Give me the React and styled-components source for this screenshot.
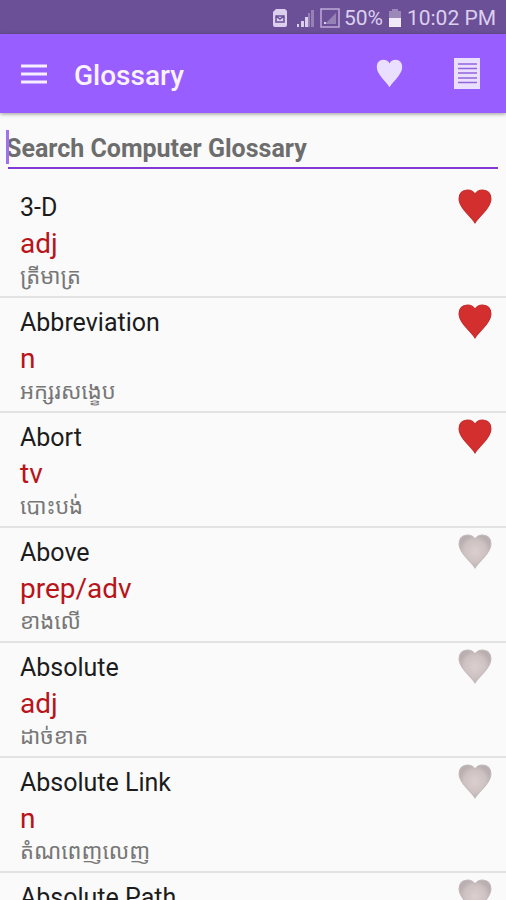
import React, { useState } from "react";
import styled, { createGlobalStyle } from "styled-components";

const GlobalStyle = createGlobalStyle`
  * {
    box-sizing: border-box;
  }

  body {
    margin: 0;
    background-color: #fafafa;
    font-family: Roboto, "Noto Sans Khmer", "Khmer OS", sans-serif;
  }
`;

const Screen = styled.div`
  display: flex;
  flex-direction: column;
  height: 100vh;
  overflow: hidden;
`;

const StatusBar = styled.div`
  display: flex;
  flex: none;
  align-items: center;
  justify-content: flex-end;
  height: 34px;
  padding: 2px 10px 0 0;
  background-color: #6b5098;
  color: #dccfee;
  font-size: 21px;
  line-height: 24px;
`;

const StatusIcon = styled.svg`
  flex: none;
  margin-right: ${props => props.$gap}px;
`;

const StatusText = styled.span`
  margin-right: ${props => props.$gap || 0}px;
`;

const Toolbar = styled.header`
  display: flex;
  flex: none;
  align-items: center;
  height: 79px;
  padding: 0 21px 0 16px;
  background-color: #985eff;
  box-shadow: 0 1px 4px rgba(0, 0, 0, 0.4);
  z-index: 1;
`;

const Title = styled.h1`
  flex: 1;
  margin: 0 0 0 22px;
  padding-top: 4px;
  color: #f8f3ff;
  font-size: 28px;
  font-weight: 500;
  line-height: 32px;
`;

const IconButton = styled.button`
  display: flex;
  align-items: center;
  justify-content: center;
  width: 36px;
  height: 44px;
  margin-left: ${props => props.$gap || 0}px;
  padding: 0;
  border: none;
  background: none;
`;

const SearchBox = styled.label`
  position: relative;
  display: block;
  flex: none;
  height: 56px;
  margin: 0 8px;
  border-bottom: 2px solid #8338d8;
`;

const SearchInput = styled.input`
  width: 100%;
  height: 40px;
  margin: 15px 0 0 -2px;
  padding: 0;
  border: none;
  outline: none;
  background: none;
  color: #333;
  font-family: inherit;
  font-size: 25px;
  font-weight: 700;

  &::placeholder {
    color: #6d6d6d;
    opacity: 1;
  }
`;

const Caret = styled.span`
  position: absolute;
  top: 17px;
  left: -2px;
  width: 3px;
  height: 34px;
  background-color: #a070f0;
`;

const WordList = styled.ul`
  flex: 1;
  min-height: 0;
  margin: 0;
  padding: 14px 0 0;
  overflow-y: auto;
  list-style: none;
  scrollbar-width: none;
`;

const WordRow = styled.li`
  display: flex;
  align-items: flex-start;
  justify-content: space-between;
  height: 115px;
  padding: 6px 14px 0 20px;
  border-bottom: 2px solid #e2e2e2;
`;

const Word = styled.div`
  color: #1c1c1c;
  font-size: 25px;
  line-height: 37px;
`;

const WordType = styled.div`
  color: #b8141a;
  font-size: 28px;
  line-height: 36px;
`;

const Meaning = styled.div`
  color: #777;
  font-size: 22px;
  line-height: 30px;
`;

const HeartButton = styled.button`
  display: block;
  padding: 0;
  border: none;
  background: none;
  line-height: 0;
`;

const words = [
  { word: "3-D", type: "adj", meaning: "ត្រីមាត្រ", liked: true },
  { word: "Abbreviation", type: "n", meaning: "អក្សរសង្ខេប", liked: true },
  { word: "Abort", type: "tv", meaning: "បោះបង់", liked: true },
  { word: "Above", type: "prep/adv", meaning: "ខាងលើ", liked: false },
  { word: "Absolute", type: "adj", meaning: "ដាច់ខាត", liked: false },
  { word: "Absolute Link", type: "n", meaning: "តំណពេញលេញ", liked: false },
  { word: "Absolute Path", type: "n", meaning: "ផ្លូវពេញលេញ", liked: false }
];

const HEART =
  "M16.500 34C14 29.500 9 25.500 5.500 20.500C3 17 1 14 1 10C1 4.500 4.200 1 9 1C12.500 1 15.300 2.500 16.500 5.500C17.700 2.500 20.500 1 24 1C28.800 1 32 4.500 32 10C32 14 30 17 27.500 20.500C24 25.500 19 29.500 16.500 34Z";

const Heart = ({ width, height, fill, stroke }) => (
  <svg width={width} height={height} viewBox="0 0 33 35" preserveAspectRatio="none">
    <defs>
      <radialGradient id="fadedHeart">
        <stop offset="0" stopColor="#dccfcf" />
        <stop offset="0.7" stopColor="#cdc1c1" />
        <stop offset="1" stopColor="#b9afb0" />
      </radialGradient>
    </defs>
    <path d={HEART} fill={fill} stroke={stroke} />
  </svg>
);

const App = () => {
  const [search, setSearch] = useState("");
  const [list, setList] = useState(words);

  const toggleLike = word => {
    setList(
      list.map(item =>
        item.word === word ? { ...item, liked: !item.liked } : item
      )
    );
  };

  const shown = list.filter(item =>
    item.word.toLowerCase().includes(search.toLowerCase())
  );

  return (
    <Screen>
      <GlobalStyle />
      <StatusBar>
        <StatusIcon $gap={8} width="16" height="18" viewBox="0 0 16 18">
          <path d="M4 0H13L15 2V16Q15 18 13 18H3Q1 18 1 16V3Z" fill="#dccfee" />
          <path d="M4 7H12V13H4ZM4 7L8 10L12 7" fill="none" stroke="#6b5098" strokeWidth="1.500" />
        </StatusIcon>
        <StatusIcon $gap={6} width="18" height="18" viewBox="0 0 18 18">
          <path d="M1 15h2v3H1zM5 12h3v6H5zM9 8h3v10H9z" fill="#dccfee" />
          <path d="M12 4h2v14h-2zM15 1h3v17h-3z" fill="#9581b6" />
        </StatusIcon>
        <StatusIcon $gap={4} width="20" height="20" viewBox="0 0 20 20">
          <path d="M1 1H19V19H1Z" fill="none" stroke="#bdabd5" strokeWidth="1.500" />
          <path d="M5 16L16 5V16Z" fill="#9581b6" />
          <path d="M4 14h2v2H4z" fill="#dccfee" />
        </StatusIcon>
        <StatusText $gap={6}>50%</StatusText>
        <StatusIcon $gap={6} width="12" height="18" viewBox="0 0 12 18">
          <path d="M3 0H9V2H12V9H0V2H3Z" fill="#9c89b9" />
          <path d="M0 9H12V18H0Z" fill="#f0eaf8" />
        </StatusIcon>
        <StatusText>10:02 PM</StatusText>
      </StatusBar>
      <Toolbar>
        <IconButton aria-label="Menu">
          <svg width="28" height="20" viewBox="0 0 28 20">
            <path d="M1 2H27M1 10H27M1 18H27" stroke="#f5efff" strokeWidth="3" />
          </svg>
        </IconButton>
        <Title>Glossary</Title>
        <IconButton aria-label="Favourites">
          <Heart width={27} height={29} fill="#eadfff" />
        </IconButton>
        <IconButton aria-label="Notes" $gap={42}>
          <svg width="26" height="31" viewBox="0 0 26 31">
            <path d="M0 0H26V31H0Z" fill="#eadfff" />
            <path d="M4 6H23M4 10.500H23M4 15H23M4 20H23M4 24.500H23" stroke="#9265dd" strokeWidth="1.500" />
          </svg>
        </IconButton>
      </Toolbar>
      <SearchBox>
        <SearchInput
          type="text"
          aria-label="Search Computer Glossary"
          placeholder="Search Computer Glossary"
          value={search}
          onChange={event => setSearch(event.target.value)}
        />
        {search === "" && <Caret />}
      </SearchBox>
      <WordList>
        {shown.map(item => (
          <WordRow key={item.word}>
            <div>
              <Word>{item.word}</Word>
              <WordType>{item.type}</WordType>
              <Meaning lang="km">{item.meaning}</Meaning>
            </div>
            <HeartButton
              aria-label={`Like ${item.word}`}
              aria-pressed={item.liked}
              onClick={() => toggleLike(item.word)}
            >
              <Heart
                width={34}
                height={35}
                fill={item.liked ? "#d32f2f" : "url(#fadedHeart)"}
                stroke={item.liked ? "#c62828" : "#c3b9ba"}
              />
            </HeartButton>
          </WordRow>
        ))}
      </WordList>
    </Screen>
  );
};

export default App;
